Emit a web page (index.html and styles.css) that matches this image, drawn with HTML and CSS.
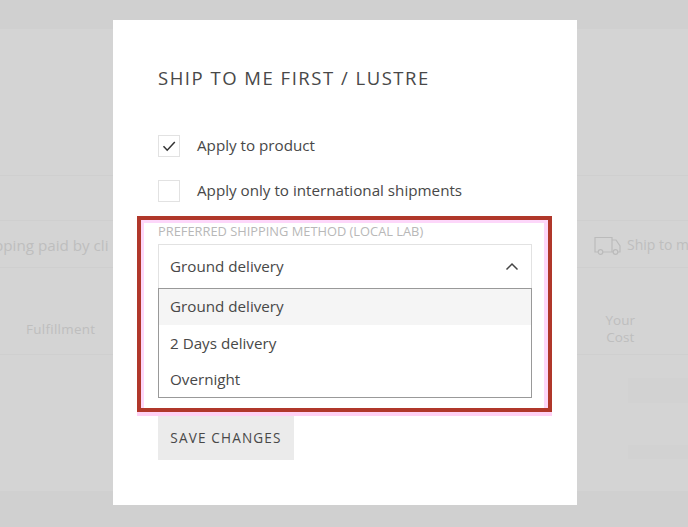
FILE: index.html
```html
<!DOCTYPE html>
<html lang="en">
<head>
<meta charset="utf-8">
<title>Ship to me first</title>
<link rel="stylesheet" href="styles.css">
</head>
<body>
<div class="page">
  <div class="sheet">
    <div class="row row-hero"></div>
    <div class="row row-gap"></div>
    <div class="row row-shipping">
      <span class="paid">pping paid by cli</span>
      <span class="ship">
        <svg class="truck" viewBox="0 0 27 19" width="27" height="19"><path d="M4 16H1V1.500H18V16H9M18 4h4l4 6v6h-2M18 16h1"/><circle cx="6.500" cy="16" r="2.300"/><circle cx="21.500" cy="16" r="2.300"/></svg>
        <span>Ship to m</span>
      </span>
    </div>
    <div class="row row-heads">
      <span class="fulfillment">Fulfillment</span>
      <span class="cost">Your<br>Cost</span>
    </div>
    <div class="blocks"><i class="block tall"></i><i class="block"></i></div>
  </div>
</div>
<div class="overlay">
  <form class="modal">
    <h1>SHIP TO ME FIRST / LUSTRE</h1>
    <div class="check"><span class="box"><svg viewBox="0 0 20 20" width="20" height="20"><path d="M4.500 10.200l3.700 4L15.800 6"/></svg></span><span class="caption">Apply to product</span></div>
    <div class="check"><span class="box"></span><span class="caption">Apply only to international shipments</span></div>
    <div class="field">
      <div class="label">PREFERRED SHIPPING METHOD (LOCAL LAB)</div>
      <div class="select"><span>Ground delivery</span><svg viewBox="0 0 14 9" width="14" height="9"><path d="M1.500 7.500L7 2l5.500 5.500"/></svg></div>
      <div class="menu">
        <div class="option active">Ground delivery</div>
        <div class="option">2 Days delivery</div>
        <div class="option">Overnight</div>
      </div>
      <div class="highlight"></div>
    </div>
    <button type="button" class="save">SAVE CHANGES</button>
  </form>
</div>
</body>
</html>
```
FILE: styles.css
```css
* { box-sizing: border-box; }
body {
  margin: 0;
  height: 527px;
  overflow: hidden;
  background: #d0d0d0;
  color: #484848;
  font: 15.2px/20px "Open Sans", sans-serif;
}
.page { height: 527px; padding: 29px 0 36px; color: #bebebe; }
.sheet { height: 462px; background: #d4d4d4; }
.row { display: flex; align-items: center; border-bottom: 1px solid #cfcfcf; }
.row-hero { height: 147px; }
.row-gap { height: 45px; }
.row-shipping { height: 47px; padding-top: 2px; justify-content: space-between; }
.paid { margin-left: -6px; white-space: nowrap; font-size: 15.2px; }
.ship { display: flex; align-items: center; gap: 6px; width: 94px; white-space: nowrap; font-size: 14px; }
.truck { flex: none; fill: none; stroke: #bbb; stroke-width: 1.2; }
.row-heads { height: 87px; padding: 35px 53px 0 26px; justify-content: space-between; font-size: 13.4px; line-height: 17px; }
.fulfillment { padding-top: 1px; letter-spacing: .3px; }
.cost { text-align: center; font-size: 13.5px; }
.blocks { display: flex; flex-direction: column; align-items: flex-end; gap: 42px; padding-top: 23px; }
.block { width: 60px; height: 14px; background: #d2d2d2; }
.tall { height: 25px; }

.overlay {
  position: absolute;
  inset: 0;
  display: flex;
  align-items: flex-start;
  padding: 19.5px 0 0 112.5px;
}
.modal { width: 464.5px; height: 485.5px; padding: 47.5px 45.5px 0; background: #fff; }
h1 { margin: 0 0 47px; font-size: 18.5px; line-height: 21px; font-weight: 400; letter-spacing: 1.51px; white-space: nowrap; }
.check { display: flex; align-items: center; gap: 17px; height: 22px; margin-bottom: 23px; white-space: nowrap; }
.caption { padding-bottom: 2px; }
.box { width: 22px; height: 22px; border: 1px solid #e2e2e2; }
.box svg { display: block; fill: none; stroke: #333; stroke-width: 1.5; }
.field { position: relative; width: 374px; }
.label { height: 19px; line-height: 13px; font-size: 12.85px; color: #b8b8b8; white-space: nowrap; }
.select { display: flex; align-items: center; justify-content: space-between; height: 44px; padding: 0 12px 0 11px; border: 1px solid #e2e2e2; border-bottom: 0; }
.select span { padding-bottom: 2px; }
.select svg { fill: none; stroke: #444; stroke-width: 1.5; }
.menu { height: 110px; border: 1px solid #999; }
.option { height: 36px; padding: 0 11px; line-height: 36px; }
.active { background: #f5f5f5; line-height: 35px; }
.highlight {
  position: absolute;
  left: -21px;
  top: -9px;
  width: 415px;
  height: 196px;
  border: 4px solid #b0372a;
  box-shadow: inset 3px 3px #fdd7fa, inset -4px 0 #fdd7fa, 0 4px #ffd1f4;
}
.save {
  display: block;
  width: 136px;
  height: 44px;
  margin: 18px 0 0;
  padding: 0 0 1px;
  border: 0;
  background: #ebebeb;
  color: #484848;
  font: 13.6px/20px "Open Sans", sans-serif;
  letter-spacing: 1.15px;
}
```
